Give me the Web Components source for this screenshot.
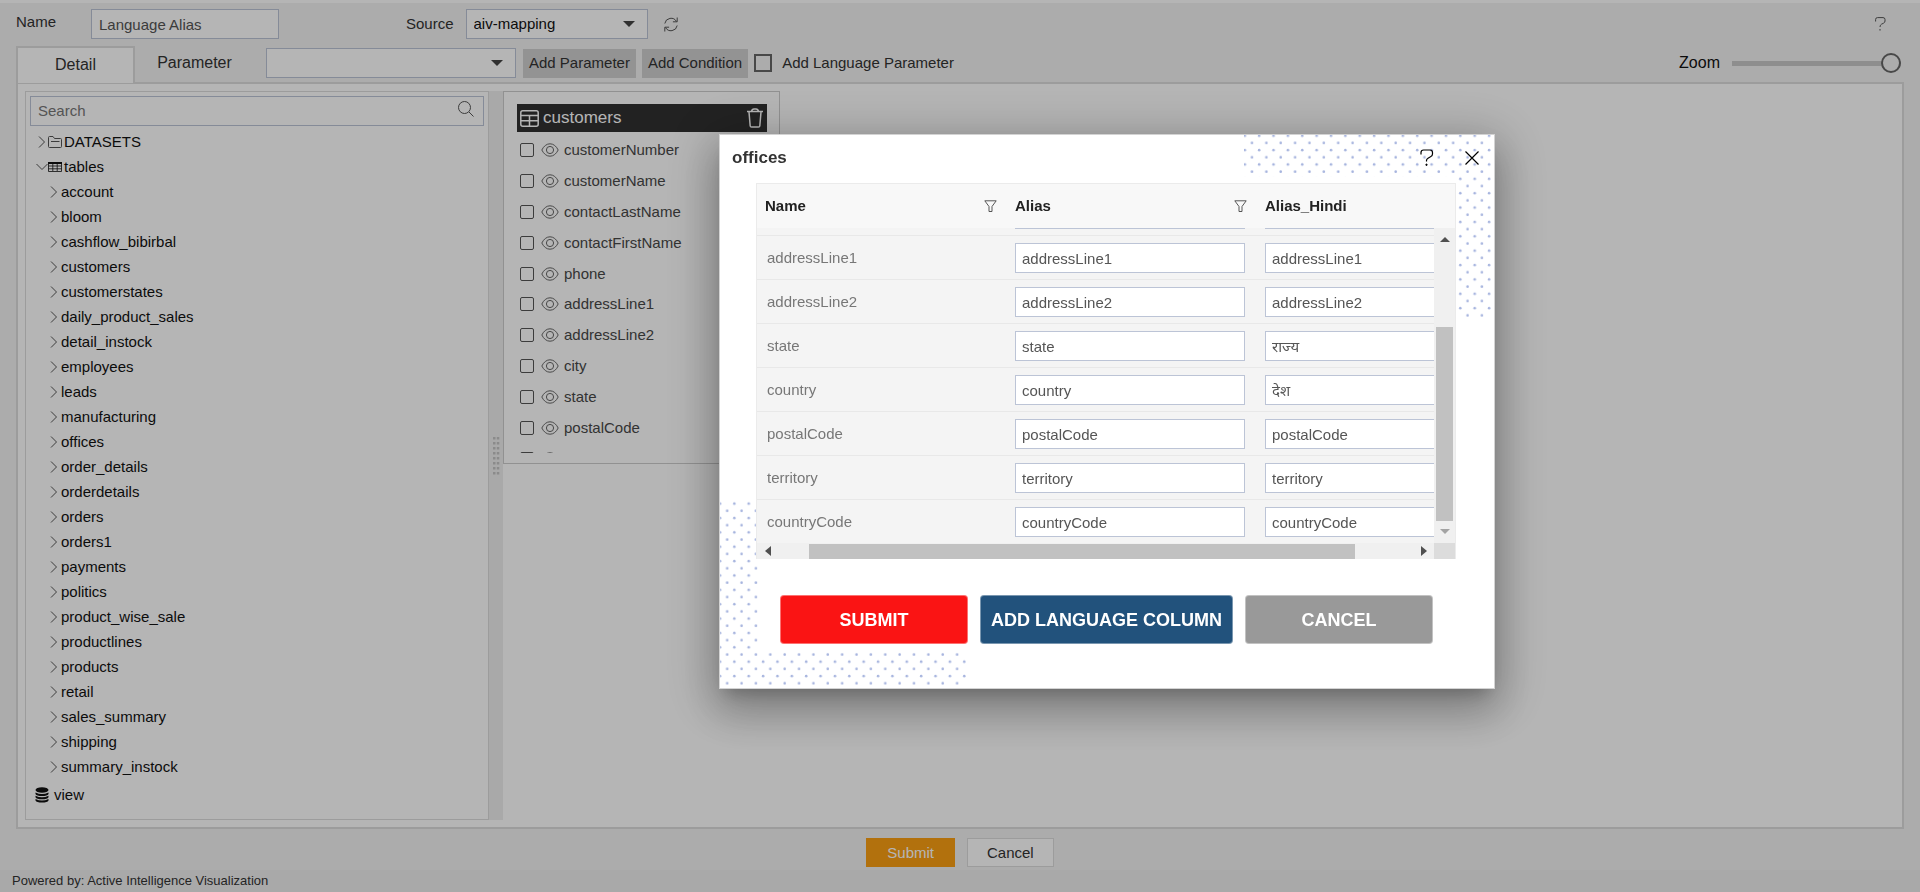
<!DOCTYPE html>
<html lang="en">
<head>
<meta charset="utf-8">
<title>Language Alias</title>
<style>
  body { margin: 0; font: 15px/20px "Liberation Sans", Arial, "Noto Sans", sans-serif; color: #333; }
</style>
</head>
<body>
<alias-app></alias-app>
<script>
const BASE = `
  *, *::before { box-sizing: border-box; }
  button, input, select { font: inherit; color: inherit; margin: 0; border-radius: 0; }
  svg { display: block; fill: none; stroke: currentColor; }
`;

class BaseElement extends HTMLElement {
  connectedCallback() {
    if (this.shadowRoot) return;
    this.attachShadow({ mode: 'open' });
    const t = document.createElement('template');
    t.innerHTML = `<style>${BASE}${this.css()}</style>${this.html()}`;
    this.shadowRoot.append(t.content.cloneNode(true));
  }
  css() { return ''; }
  html() { return '<slot></slot>'; }
}

const ICONS = {
  refresh: [14, 15, '<path d="M.8 6.500A6.300 6.300 0 0 1 12.500 4.500M13.200 8.500A6.300 6.300 0 0 1 1.500 10.500M13.200 .5v4.300h-4.300M.8 14.500v-4.300h4.300"/>'],
  help: [14, 18, '<path d="M1 5.500V3.500Q1 1 3.500 1h6.500Q12.500 1 12.500 3.500v1.500Q12.500 7 10.500 7.800L8 9.200Q6.500 10 6.500 11.500V12.500" stroke-width="1.200"/><circle cx="6.500" cy="15.800" r=".7" fill="currentColor"/>'],
  helpsmall: [11, 14, '<path d="M.6 4.500V2.500Q.6.6 2.500.6h5.500Q10 .6 10 2.500v1.500Q10 5.500 8.500 6.200L6.500 7.200Q5 8 5 10M5 12v1.600"/>'],
  close: [14, 14, '<path d="M.5.5l13 13M13.500.5l-13 13" stroke-width="1.200"/>'],
  search: [16, 16, '<circle cx="6.500" cy="6.500" r="6"/><path d="M11 11l4.500 4.500"/>'],
  right: [8, 12, '<path d="M1 .5l5.500 5.500L1 11.500"/>'],
  down: [12, 8, '<path d="M.5 1l5.500 5.500L11.500 1"/>'],
  folder: [14, 12, '<path d="M.5 10.500v-9Q.5.5 1.500.5h3.500l1.500 2h6q1 0 1 1v7q0 1-1 1h-11q-1 0-1-1zM3 5.500h8.500" stroke="#555"/>'],
  grid: [14, 10, '<path d="M0 1h14" stroke-width="2"/><path d="M.5 1v8.500h13V1M4.800 1v8M9.200 1v8M.5 4h13M.5 6.800h13" stroke-width=".8"/>'],
  database: [14, 16, '<g fill="currentColor" stroke="none"><ellipse cx="7" cy="3" rx="6.500" ry="2.800"/><path d="M.5 5.400q6.500 3 13 0v1.500q-1 2-6.500 2t-6.500-2zM.5 8.800q6.500 3 13 0v1.500q-1 2-6.500 2t-6.500-2zM.5 12q6.500 3 13 0v1.500q-1 2-6.500 2t-6.500-2z"/></g>'],
  table: [19, 17, '<rect x=".8" y=".8" width="17.400" height="15.400" rx="2" stroke-width="1.500"/><path d="M1 5.500h17M1 10.800h17M9.500 5.500v11" stroke-width="1.500"/>'],
  trash: [16, 20, '<path d="M0 3.500h16M4.500 3.500Q5 1 7 1h2Q11 1 11.500 3.500M2 4l1.200 14q.1 1 1.300 1h7q1.200 0 1.300-1L14 4" stroke-width="1.500"/>'],
  eye: [18, 14, '<path d="M.8 7Q4 .8 9 .8T17.200 7Q14 13.200 9 13.200T.8 7z"/><circle cx="9" cy="7" r="3.600"/>'],
  filter: [13, 12, '<path d="M.8.8h11.400L8 6.500v5h-3v-5z"/>'],
  caret: [12, 6, '<path d="M0 0h12L6 6z" fill="currentColor" stroke="none"/>'],
  up: [10, 6, '<path d="M0 6h10L5 1z" fill="currentColor" stroke="none"/>'],
  dn: [10, 6, '<path d="M0 0h10L5 5z" fill="currentColor" stroke="none"/>'],
  lt: [6, 10, '<path d="M6 0v10L0 5z" fill="currentColor" stroke="none"/>'],
  rt: [6, 10, '<path d="M0 0v10L6 5z" fill="currentColor" stroke="none"/>']
};
customElements.define('ui-icon', class extends BaseElement {
  css() { return ':host { display: block; flex: none; pointer-events: none; }'; }
  html() {
    const [w, h, body] = ICONS[this.getAttribute('name')];
    return `<svg width="${w}" height="${h}" viewBox="0 0 ${w} ${h}" aria-hidden="true">${body}</svg>`;
  }
});

customElements.define('text-field', class extends BaseElement {
  css() { return `
    :host { display: flex; align-items: center; }
    label { width: var(--label-width, auto); padding-bottom: 4px; }
    input { width: var(--field-width, 188px); height: 30px; padding: 0 7px; border: 1px solid #bcc4d6; background: #fff; color: #555; }`; }
  html() { return `<label for="f"><slot></slot></label><input id="f" value="${this.getAttribute('value') || ''}">`; }
});

customElements.define('drop-down', class extends BaseElement {
  css() { return `
    :host { display: flex; align-items: center; gap: 12px; }
    .box { display: grid; align-items: center; }
    select, ui-icon { grid-area: 1 / 1; }
    select { appearance: none; width: var(--field-width, 182px); height: 30px; padding: 0 7px; border: 1px solid #bcc4d6; background: #fff; color: #111; }
    ui-icon { justify-self: end; margin-right: 13px; color: #444; }`; }
  html() {
    const v = this.getAttribute('value') || '';
    const name = this.getAttribute('name') || '';
    return `${name ? `<label for="s">${name}</label>` : ''}<span class="box"><select id="s" aria-label="${name || 'Parameter type'}"><option>${v}</option></select><ui-icon name="caret"></ui-icon></span>`;
  }
});

customElements.define('tree-node', class extends BaseElement {
  css() { return `
    :host { display: block; color: #111; }
    .row { display: flex; align-items: center; height: 25px; padding-left: var(--indent, 6px); }
    .arrow { width: 12px; display: flex; justify-content: center; color: #555; }
    .kind { width: 14px; margin-right: 2px; display: flex; justify-content: center; }
    .solo { margin: 0 5px; }
    :host([level="2"]) { --indent: 18px; }
    :host([level="2"]) .arrow { margin-right: 1px; }
    :host([kind="database"]) { --indent: 0px; padding-top: 3px; }`; }
  html() {
    const open = this.getAttribute('arrow'), kind = this.getAttribute('kind');
    return `<div class="row">${open ? `<span class="arrow"><ui-icon name="${open}"></ui-icon></span>` : ''}${
      kind ? `<span class="kind ${open ? '' : 'solo'}"><ui-icon name="${kind}"></ui-icon></span>` : ''}<slot></slot></div>`;
  }
});

const TABLES = ['account', 'bloom', 'cashflow_bibirbal', 'customers', 'customerstates', 'daily_product_sales', 'detail_instock',
  'employees', 'leads', 'manufacturing', 'offices', 'order_details', 'orderdetails', 'orders', 'orders1', 'payments', 'politics',
  'product_wise_sale', 'productlines', 'products', 'retail', 'sales_summary', 'shipping', 'summary_instock'];

customElements.define('source-tree', class extends BaseElement {
  css() { return `
    :host { display: block; flex: none; width: 464px; border: 1px solid #dcdcdc; background: #fff; padding: 4px; }
    .search { display: grid; align-items: center; }
    .search > * { grid-area: 1 / 1; }
    input { width: 100%; height: 30px; padding: 0 7px 2px; border: 1px solid #bcc4d6; background: #fff; }
    input::placeholder { color: #777; opacity: 1; }
    ui-icon { justify-self: end; margin: 0 10px 4px 0; color: #555; }
    .nodes { padding: 3px 0 0; }`; }
  html() { return `
    <div class="search"><input type="search" placeholder="Search" aria-label="Search"><ui-icon name="search"></ui-icon></div>
    <div class="nodes">
      <tree-node arrow="right" kind="folder">DATASETS</tree-node>
      <tree-node arrow="down" kind="grid">tables</tree-node>
      ${TABLES.map(t => `<tree-node level="2" arrow="right">${t}</tree-node>`).join('')}
      <tree-node kind="database">view</tree-node>
    </div>`; }
});

customElements.define('split-handle', class extends BaseElement {
  css() { return `
    :host { display: flex; flex: none; width: 14px; align-items: center; justify-content: center; background: #efefef; }
    svg { fill: #c4c4c4; stroke: none; }`; }
  html() {
    const dots = Array.from({ length: 8 }, (_, i) => `<path d="M0 ${i * 5}h2.500v2.500H0zM3.800 ${i * 5}h2.500v2.500H3.800z"/>`).join('');
    return `<svg width="7" height="38" viewBox="0 0 7 38" aria-hidden="true">${dots}</svg>`;
  }
});

const FIELDS = ['customerNumber', 'customerName', 'contactLastName', 'contactFirstName', 'phone', 'addressLine1', 'addressLine2', 'city', 'state', 'postalCode', ''];
customElements.define('table-card', class extends BaseElement {
  css() { return `
    :host { display: block; width: 277px; padding: 12px 12px 10px 13px; border: 1px solid #cdcdcd; background: #fff; }
    header { display: flex; align-items: center; gap: 4px; height: 28px; padding: 0 4px 0 3px; background: #303030; color: #fff; font-size: 17px; }
    h2 { flex: 1; margin: 0; font: inherit; }
    .clip { height: 321px; overflow: hidden; }
    ul { display: grid; grid-auto-rows: 1fr; height: 339px; margin: 3px 0 0; padding: 0; list-style: none; }
    li { display: flex; align-items: center; gap: 7px; padding-left: 3px; }
    label { display: flex; align-items: center; gap: 5px; color: #484848; }
    input { appearance: none; width: 14px; height: 14px; border: 1px solid #555; border-radius: 2px; }
    li ui-icon { color: #666; }`; }
  html() { return `
    <header><ui-icon name="table"></ui-icon><h2><slot></slot></h2><ui-icon name="trash"></ui-icon></header>
    <div class="clip"><ul>${FIELDS.map((f, i) => `<li><input type="checkbox" id="c${i}" aria-label="${f || 'column'}"><label for="c${i}"><ui-icon name="eye"></ui-icon>${f}</label></li>`).join('')}</ul></div>`; }
});

const ROWS = [['', '', ''], ['addressLine1', 'addressLine1', 'addressLine1'], ['addressLine2', 'addressLine2', 'addressLine2'], ['state', 'state', 'राज्य'],
  ['country', 'country', 'देश'], ['postalCode', 'postalCode', 'postalCode'], ['territory', 'territory', 'territory'], ['countryCode', 'countryCode', 'countryCode']];
customElements.define('alias-grid', class extends BaseElement {
  css() { return `
    :host { display: grid; grid-template: 44px 315px 16px / 1fr 21px; border: 1px solid #ebebeb; border-bottom: 0; background: #f4f4f4; }
    .head { grid-column: 1 / 3; background: #f8f8f8; overflow: hidden; }
    .body { display: flex; flex-direction: column; justify-content: flex-end; overflow: hidden; }
    table { flex: none; width: 748px; table-layout: fixed; border-collapse: separate; border-spacing: 0; }
    col.first { width: 248px; }
    th { height: 44px; padding: 0 8px; color: #222; text-align: left; vertical-align: middle; }
    .head th + th { padding-left: 10px; }
    th div { display: flex; align-items: center; justify-content: space-between; height: 36px; }
    th ui-icon { color: #555; }
    td { height: 44px; padding: 7px 10px 6px; border-top: 1px solid #e8e8e8; color: #777; }
    input { display: block; width: 100%; height: 30px; padding: 0 6px; border: 1px solid #bcc4d6; background: #fff; color: #555; }
    .bar { display: flex; align-items: center; justify-content: space-between; background: #f0f0f0; color: #505050; }
    .v { flex-direction: column; padding: 8px 0; }
    .v i { width: 17px; height: 194px; margin-top: 76px; background: #c1c1c1; }
    .v ui-icon:last-child { color: #a3a3a3; }
    .h { padding: 0 7px 0 8px; }
    .h i { width: 546px; height: 15px; margin-right: 29px; background: #c1c1c1; }
    .corner { background: #dcdcdc; }`; }
  html() {
    const cols = '<colgroup><col class="first"><col><col></colgroup>';
    return `
    <div class="head"><table>${cols}<thead><tr>
      <th scope="col"><div>Name<ui-icon name="filter"></ui-icon></div></th>
      <th scope="col"><div>Alias<ui-icon name="filter"></ui-icon></div></th>
      <th scope="col"><div>Alias_Hindi</div></th></tr></thead></table></div>
    <div class="body"><table>${cols}<tbody>${ROWS.map(([n, a, h]) => `<tr><td>${n}</td>
      <td><input aria-label="Alias ${n}" value="${a}"></td><td><input aria-label="Alias Hindi ${n}" value="${h}"></td></tr>`).join('')}</tbody></table></div>
    <div class="bar v"><ui-icon name="up"></ui-icon><i></i><ui-icon name="dn"></ui-icon></div>
    <div class="bar h"><ui-icon name="lt"></ui-icon><i></i><ui-icon name="rt"></ui-icon></div>
    <div class="corner"></div>`;
  }
});

customElements.define('dot-corner', class extends BaseElement {
  css() { return ':host { position: absolute; }'; }
  html() {
    const top = this.hasAttribute('top');
    return `<svg width="251" height="188" viewBox="0 0 251 188" aria-hidden="true"><defs>
      <pattern id="d" width="14.37" height="14.37" patternUnits="userSpaceOnUse" patternTransform="translate(${top ? '-4.2 -4.2' : '-5 -1.300'})">
      <g fill="#a6b4de" stroke="none"><circle cx="5" cy="5" r="1.300"/><circle cx="12.180" cy="12.180" r="1.300"/></g></pattern></defs>
      <path stroke="none" fill="url(#d)" d="${top ? 'M0 0h247v184h-35V42H0z' : 'M0 0h38v152h211v36H0z'}"/></svg>`;
  }
});

customElements.define('big-button', class extends BaseElement {
  css() { return `
    :host { display: block; }
    button { width: 100%; height: 49px; padding: 0; border: 1px solid rgba(255,255,255,.4); border-radius: 4px; background: var(--fill); color: #fff; font-size: 18px; font-weight: bold; }`; }
  html() { return '<button type="button"><slot></slot></button>'; }
});

customElements.define('alias-dialog', class extends BaseElement {
  css() { return `
    :host { position: fixed; inset: 0; background: rgba(0,0,0,.29); }
    section { position: absolute; left: 719px; top: 134px; width: 776px; padding-bottom: 44px; border: 1px solid #d3d3d3; background: #fff;
      box-shadow: 0 11px 15px -7px rgba(0,0,0,.2), 0 24px 38px 3px rgba(0,0,0,.14), 0 9px 46px 8px rgba(0,0,0,.24); }
    dot-corner[top] { top: 0; right: -1px; }
    dot-corner[bottom] { left: 0; bottom: 0; }
    header { position: relative; display: flex; align-items: center; height: 45px; margin-bottom: 3px; padding: 0 15px 0 12px; }
    h1 { flex: 1; margin: 0; font-size: 17px; line-height: 20px; color: #333; }
    header button { display: flex; padding: 0; border: 0; background: none; color: #000; }
    header button + button { margin-left: 31px; }
    alias-grid { position: relative; margin: 0 38px 0 36px; }
    footer { position: relative; display: grid; grid-template-columns: 188px 1fr 188px; gap: 12px; padding: 36px 61px 0 60px; }`; }
  html() { return `
    <section role="dialog" aria-labelledby="t">
      <dot-corner top></dot-corner><dot-corner bottom></dot-corner>
      <header><h1 id="t"><slot></slot></h1><button type="button" aria-label="Help"><ui-icon name="help"></ui-icon></button><button type="button" aria-label="Close"><ui-icon name="close"></ui-icon></button></header>
      <alias-grid></alias-grid>
      <footer><big-button style="--fill:#fa1414">SUBMIT</big-button><big-button style="--fill:#22527c">ADD LANGUAGE COLUMN</big-button><big-button style="--fill:#999">CANCEL</big-button></footer>
    </section>`; }
});

customElements.define('tool-bar', class extends BaseElement {
  css() { return `
    :host { display: flex; align-items: center; height: 30px; padding: 0 34px 0 16px; }
    text-field { --label-width: 75px; margin-right: 127px; }
    button { display: flex; padding: 0; border: 0; background: none; color: #555; }
    .refresh { margin-left: 16px; }
    .help { margin-left: auto; }`; }
  html() { return `
    <text-field value="Language Alias">Name</text-field>
    <drop-down name="Source" value="aiv-mapping"></drop-down>
    <button class="refresh" type="button" aria-label="Refresh"><ui-icon name="refresh"></ui-icon></button>
    <button class="help" type="button" aria-label="Help"><ui-icon name="helpsmall"></ui-icon></button>`; }
});

customElements.define('tab-strip', class extends BaseElement {
  css() { return `
    :host { display: flex; position: relative; height: 37px; margin: 7px 16px -1px; }
    .tab { border: 0; padding: 0; background: none; font-size: 16px; width: 119px; height: 34px; }
    .tab.on { height: 37px; padding-bottom: 2px; border: 2px solid #dcdcdc; border-bottom: 0; background: #fff; }
    .tools { flex: 1; display: flex; align-items: center; height: 34px; }
    drop-down { --field-width: 250px; margin: 0 7px 0 12px; }
    .add { height: 29px; padding: 0 6px; margin-right: 6px; border: 0; background: #cfcfcf; }
    .check { appearance: none; width: 18px; height: 18px; margin-right: 10px; border: 2px solid #666; }
    .zoom { margin-left: auto; margin-right: 12px; font-size: 16px; color: #111; }
    .range { appearance: none; width: 169px; height: 20px; margin-right: 3px; background: linear-gradient(#c9c9c9, #c9c9c9) 0 8px / 100% 5px no-repeat; }
    .range::-webkit-slider-thumb { appearance: none; width: 20px; height: 20px; border: 2px solid #666; border-radius: 50%; background: #f2f2f2; }`; }
  html() { return `
    <button class="tab on" type="button">Detail</button><button class="tab" type="button">Parameter</button>
    <div class="tools"><drop-down></drop-down>
      <button class="add" type="button">Add Parameter</button><button class="add" type="button">Add Condition</button>
      <input class="check" type="checkbox" id="lp"><label for="lp">Add Language Parameter</label>
      <label class="zoom" for="z">Zoom</label><input class="range" id="z" type="range" value="100"></div>`; }
});

customElements.define('alias-app', class extends BaseElement {
  css() { return `
    :host { display: flex; flex-direction: column; min-height: 100vh; box-sizing: border-box; border-top: 3px solid #fff; padding-top: 6px; background: #f2f2f2; }
    main { flex: 1; display: flex; margin: 0 16px; padding: 7px; border: 2px solid #dcdcdc; background: #fff; }
    .canvas { flex: 1; }
    .actions { display: flex; justify-content: center; gap: 12px; padding: 9px 0 3px; }
    .actions button { height: 29px; padding: 0 21px; border: 0; background: #fb9f13; color: #fff; }
    .actions .plain { padding: 0 19px; border: 1px solid #dcdcdc; background: #fff; color: #333; }
    footer { height: 22px; padding-left: 12px; background: #efefef; font-size: 13px; line-height: 22px; color: #333; }`; }
  html() { return `
    <tool-bar></tool-bar>
    <tab-strip></tab-strip>
    <main><source-tree></source-tree><split-handle></split-handle><div class="canvas"><table-card>customers</table-card></div></main>
    <div class="actions"><button type="button">Submit</button><button class="plain" type="button">Cancel</button></div>
    <footer>Powered by: Active Intelligence Visualization</footer>
    <alias-dialog>offices</alias-dialog>`; }
});
</script>
</body>
</html>
